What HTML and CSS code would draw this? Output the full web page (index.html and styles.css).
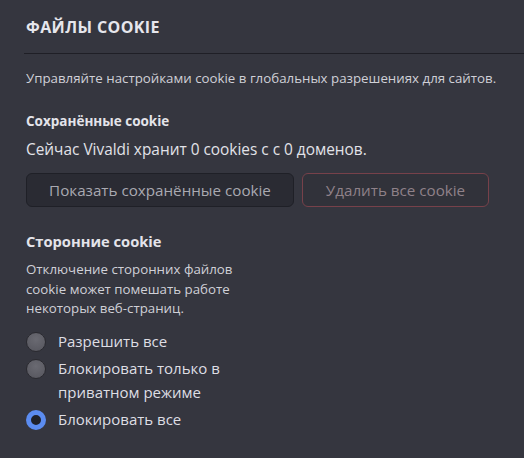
FILE: index.html
```html
<!DOCTYPE html>
<html lang="ru">
<head>
<meta charset="utf-8">
<title>Файлы cookie</title>
<link rel="stylesheet" href="styles.css">
</head>
<body>
<section class="panel">
  <h2 class="panel-title">ФАЙЛЫ COOKIE</h2>
  <p class="intro">Управляйте настройками cookie в глобальных разрешениях для сайтов.</p>

  <h3 class="group-title">Сохранённые cookie</h3>
  <p class="status">Сейчас Vivaldi хранит 0 cookies с с 0 доменов.</p>
  <div class="actions">
    <button class="btn btn-show">Показать сохранённые cookie</button>
    <button class="btn btn-danger">Удалить все cookie</button>
  </div>

  <h3 class="group-title group-third">Сторонние cookie</h3>
  <p class="note">Отключение сторонних файлов cookie может помешать работе некоторых веб-страниц.</p>
  <div class="options">
    <label class="option"><span class="radio"></span><span class="option-text">Разрешить все</span></label>
    <label class="option"><span class="radio"></span><span class="option-text">Блокировать только в приватном режиме</span></label>
    <label class="option"><span class="radio radio-on"></span><span class="option-text">Блокировать все</span></label>
  </div>
</section>
</body>
</html>
```

FILE: styles.css
```css
html, body {
  margin: 0;
  padding: 0;
  background: #35363f;
}

body {
  font-family: "Open Sans", "Noto Sans", sans-serif;
  color: #d6d6dd;
}

.panel {
  padding: 16px 0 0 24px;
}

.panel-title {
  margin: 0 0 0 2px;
  font-size: 16px;
  font-weight: 700;
  color: #e6e6ec;
  line-height: 22px;
  letter-spacing: 0.4px;
}

.panel-title::after {
  content: "";
  display: block;
  margin: 15px 0 0 -2px;
  height: 1px;
  background: #1f1f26;
}

.intro {
  margin: 14px 0 0 2px;
  font-size: 13.3px;
  line-height: 20px;
  color: #d0d0d7;
}

.group-title {
  margin: 22px 0 0 2px;
  font-size: 13.5px;
  font-weight: 700;
  line-height: 22px;
  color: #e4e4ea;
}

.status {
  margin: 7px 0 0 2px;
  font-size: 15.4px;
  line-height: 22px;
  color: #e2e2e8;
}

.actions {
  display: flex;
  gap: 8px;
  margin: 12px 0 0 2px;
}

.btn {
  height: 34px;
  border-radius: 6px;
  font-family: inherit;
  font-size: 15.2px;
  padding: 0;
  cursor: pointer;
}

.btn-show {
  width: 268px;
  background: #2a2b33;
  border: 1px solid #1f2027;
  color: #a9a9b1;
}

.btn-danger {
  width: 187px;
  background: #31323a;
  border: 1px solid #77414a;
  color: #8f8189;
}

.group-third {
  margin-top: 23px;
  font-size: 14.7px;
}

.note {
  margin: 8px 0 0 2px;
  width: 240px;
  font-size: 13.3px;
  line-height: 19.5px;
  color: #d0d0d7;
}

.options {
  display: flex;
  flex-direction: column;
  gap: 4px;
  margin: 11px 0 0 2px;
}

.option {
  display: flex;
  align-items: flex-start;
  gap: 12px;
  font-size: 15px;
  line-height: 23.5px;
  color: #dedee4;
  width: 240px;
}

.radio {
  flex: none;
  box-sizing: border-box;
  width: 20px;
  height: 20px;
  margin-top: 2px;
  border-radius: 50%;
  background: radial-gradient(circle at 50% 35%, #6a6a72, #55555d);
  border: 1px solid #2a2a30;
}

.radio-on {
  background: #1f2129;
  border: 5px solid #5b8cf0;
}
```
